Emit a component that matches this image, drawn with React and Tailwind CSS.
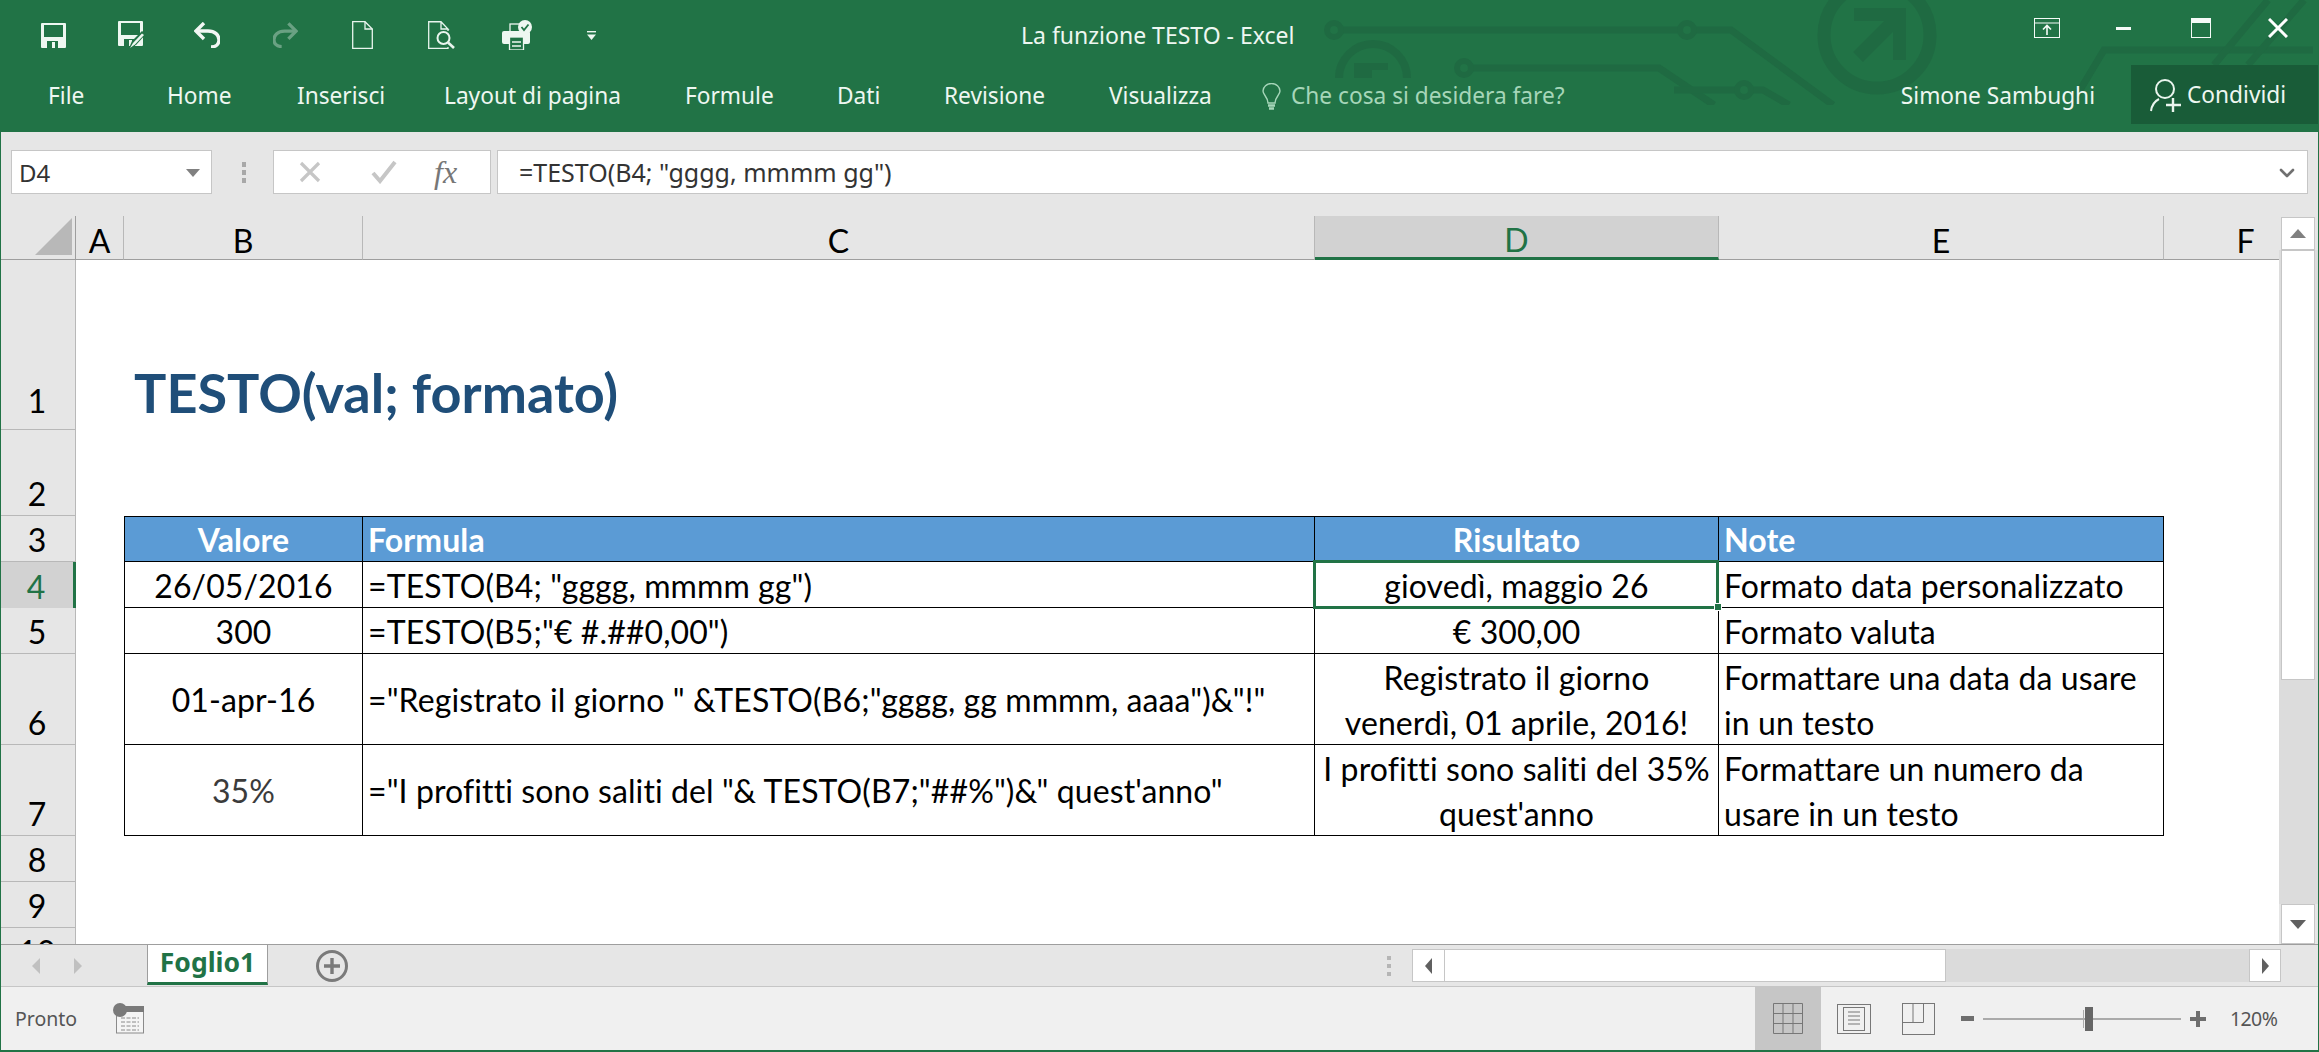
import { ChevronDown } from "lucide-react";

const ui = "font-['Noto_Sans',sans-serif]";
const sheet = "font-['Lato',sans-serif]";

const tabs = [
  ["File", "w-[35px] mr-[84px]"],
  ["Home", "w-[64px] mr-[66px]"],
  ["Inserisci", "w-[82px] mr-[65px]"],
  ["Layout di pagina", "w-[176px] mr-[65px]"],
  ["Formule", "w-[87px] mr-[65px]"],
  ["Dati", "w-[43px] mr-[64px]"],
  ["Revisione", "w-[100px] mr-[65px]"],
  ["Visualizza", "w-[104px] mr-[49px]"],
];

const columns = [
  { name: "A" },
  { name: "B" },
  { name: "C" },
  { name: "D", selected: true },
  { name: "E" },
  { name: "F", cut: true },
];

const rowLabels = ["1", "2", "3", "4", "5", "6", "7", "8", "9", "10"];

const tableRows = [
  {
    row: "3",
    head: true,
    cells: ["Valore", "Formula", "Risultato", "Note"],
  },
  {
    row: "4",
    cells: ["26/05/2016", '=TESTO(B4; "gggg, mmmm gg")', "giovedì, maggio 26", "Formato data personalizzato"],
  },
  {
    row: "5",
    cells: ["300", '=TESTO(B5;"€ #.##0,00")', "€ 300,00", "Formato valuta"],
  },
  {
    row: "6",
    cells: [
      "01-apr-16",
      '="Registrato il giorno " &TESTO(B6;"gggg, gg mmmm, aaaa")&"!"',
      "Registrato il giorno\nvenerdì, 01 aprile, 2016!",
      "Formattare una data da usare in un testo",
    ],
  },
  {
    row: "7",
    muted: true,
    cells: [
      "35%",
      '="I profitti sono saliti del "& TESTO(B7;"##%")&" quest\'anno"',
      "I profitti sono saliti del 35% quest'anno",
      "Formattare un numero da usare in un testo",
    ],
  },
];

const gridCols = "grid grid-cols-[75px_48px_239px_952px_404px_445px_115px]";

// the faint circuit board drawing behind the title bar
const CircuitArt = () => (
  <svg className="absolute left-0 top-0 pointer-events-none" width="2319" height="132" fill="none" stroke="#1f6a42">
    <defs>
      <clipPath id="art">
        <rect x="0" y="0" width="2132" height="105" />
        <rect x="2132" y="0" width="187" height="65" />
      </clipPath>
      <clipPath id="arch">
        <rect x="1300" y="0" width="200" height="78" />
      </clipPath>
    </defs>
    <g clipPath="url(#art)">
      <path d="M1340 30H1680M1692 30H1730L1832 105" strokeWidth="7" />
      <circle cx="1333" cy="30" r="7" strokeWidth="6" />
      <circle cx="1686" cy="30" r="7" strokeWidth="6" />
      <path d="M1470 68H1658L1713 105" strokeWidth="7" />
      <circle cx="1463" cy="68" r="7" strokeWidth="6" />
      <path d="M1673 90H1737M1750 90H1762L1788 105" strokeWidth="7" />
      <circle cx="1743" cy="90" r="7" strokeWidth="6" />
      <circle cx="1876" cy="35" r="53" strokeWidth="13" />
      <path d="M1857 57L1898 16" strokeWidth="14" />
      <path d="M1853 8H1905V60H1892V21H1853Z" fill="#1f6a42" stroke="none" />
      <path d="M2070 105L2103 50H2312" strokeWidth="7" />
      <path d="M2213 65L2267 0M2247 65L2303 0" strokeWidth="7" />
    </g>
    <g clipPath="url(#arch)">
      <circle cx="1372" cy="78" r="34" strokeWidth="8" />
      <path d="M1353 63H1387V70H1371V78H1353Z" fill="#1f6a42" stroke="none" />
    </g>
  </svg>
);

const SaveIcon = ({ className = "" }) => (
  <svg className={className} width="25" height="25" viewBox="0 0 25 25">
    <path
      fillRule="evenodd"
      fill="#eef7f1"
      d="M1 0H24Q25 0 25 1V24Q25 25 24 25H1Q0 25 0 24V1Q0 0 1 0ZM3 2V14H22V2ZM6 18V25H17V18ZM11 19H14V25H11Z"
    />
  </svg>
);

const SaveAsIcon = () => (
  <svg className="ml-[52px]" width="28" height="28" viewBox="0 0 28 28">
    <path
      fillRule="evenodd"
      fill="#eef7f1"
      d="M1 0H24Q25 0 25 1V24Q25 25 24 25H1Q0 25 0 24V1Q0 0 1 0ZM3 2V14H22V2ZM6 18V25H17V18ZM11 19H14V25H11Z"
    />
    <path d="M11 27L14 20L24 10L28 13L18 24Z" fill="#217346" />
    <path d="M12 27L15 22L24 12.5L26 14L17 23.5Z" fill="#eef7f1" />
  </svg>
);

const UndoIcon = ({ className = "" }) => (
  <svg className={className} width="26" height="26" viewBox="0 0 26 26" fill="none" stroke="#f2f7f4" strokeWidth="3.4">
    <path d="M10 1L2 9L10 17" />
    <path d="M3 9H14C21 9 25 13 25 18C25 22 22 25 17 25" />
  </svg>
);

const RedoIcon = () => (
  <svg className="ml-[53px] opacity-35 -scale-x-100" width="25" height="26" viewBox="0 0 26 26" fill="none" stroke="#f2f7f4" strokeWidth="3.4">
    <path d="M10 1L2 9L10 17" />
    <path d="M3 9H14C21 9 25 13 25 18C25 22 22 25 17 25" />
  </svg>
);

const NewIcon = () => (
  <svg className="ml-[54px]" width="21" height="28" viewBox="0 0 21 28" fill="none" stroke="#e9f5ee" strokeWidth="1.3">
    <path d="M0.7 0.7H13L20.3 8V27.3H0.7Z" />
    <path d="M13 0.7V8H20.3" />
  </svg>
);

const PreviewIcon = () => (
  <svg className="ml-[55px]" width="27" height="28" viewBox="0 0 27 28" fill="none" stroke="#e9f5ee" strokeWidth="1.3">
    <path d="M20 8V10M20 26V27.3H0.7V0.7H13L20 8H13V0.7" />
    <path d="M0.7 0.7H13" />
    <circle cx="15.5" cy="17" r="6" strokeWidth="2" />
    <path d="M20 21.5L26 27" strokeWidth="2.6" />
  </svg>
);

const PrintIcon = () => (
  <svg className="ml-[47px]" width="30" height="30" viewBox="0 0 30 30">
    <rect x="8" y="4" width="14" height="14" fill="none" stroke="#eef7f1" strokeWidth="1.3" />
    <rect x="0" y="11" width="28" height="13" rx="2" fill="#eef7f1" />
    <rect x="7.5" y="17" width="14" height="13" fill="#217346" stroke="#eef7f1" strokeWidth="1.3" />
    <path d="M10 22H19M10 26H19" stroke="#eef7f1" strokeWidth="1.3" />
    <circle cx="23" cy="7" r="7" fill="#eef7f1" />
    <path d="M19.5 7L22 10L26.5 4.5" fill="none" stroke="#217346" strokeWidth="1.8" />
  </svg>
);

const CaretIcon = () => (
  <svg className="ml-[55px]" width="9" height="9" viewBox="0 0 9 9" fill="#eef7f1">
    <rect width="9" height="1.4" />
    <path d="M0 3.5H9L4.5 9Z" />
  </svg>
);

const BulbIcon = () => (
  <svg width="19" height="27" viewBox="0 0 19 27" fill="none" stroke="#a6d6b9" strokeWidth="1.4">
    <path d="M6 20C6 14 1 12 1 8A8.5 7.5 0 0 1 18 8C18 12 13 14 13 20Z" />
    <path d="M6 22.5H13M7 25.5H12" strokeWidth="2.4" />
  </svg>
);

const ShareIcon = () => (
  <svg width="32" height="33" viewBox="0 0 32 33" fill="none" stroke="#eaf5ee" strokeWidth="2">
    <circle cx="15" cy="10" r="9" />
    <path d="M1 32C2 25 5 22 9 20" />
    <path d="M23 19V33M16 26H31" strokeWidth="2.4" />
  </svg>
);

const WindowControls = () => (
  <div className="flex items-center justify-end pr-[30px] h-[20px]">
    <svg width="26" height="20" viewBox="0 0 26 20" fill="none" stroke="#f5faf7" strokeWidth="1">
      <rect x="0.5" y="0.5" width="25" height="19" />
      <path d="M0.5 5H25.5" />
      <path d="M13 17V8M9 11.5L13 7.5L17 11.5" strokeWidth="1.6" />
    </svg>
    <div className="w-[15px] h-[3px] bg-[#f5faf7] ml-[56px]" />
    <svg className="ml-[60px]" width="20" height="20" viewBox="0 0 20 20" fill="none" stroke="#f5faf7">
      <rect x="0.5" y="0.5" width="19" height="19" />
      <rect x="0" y="0" width="20" height="5" fill="#f5faf7" stroke="none" />
    </svg>
    <svg className="ml-[57px]" width="20" height="20" viewBox="0 0 20 20" stroke="#ffffff" strokeWidth="3">
      <path d="M1 1L19 19M19 1L1 19" />
    </svg>
  </div>
);

const TitleBar = () => (
  <div className={`${ui} relative h-[132px] bg-[#217346] text-[#eef7f1] shrink-0`}>
    <CircuitArt />
    <div className="relative grid grid-cols-[1020px_276px_1fr] h-[65px]">
      <div className="flex items-center pl-[40px]">
        <SaveIcon />
        <SaveAsIcon />
        <UndoIcon className="ml-[48px]" />
        <RedoIcon />
        <NewIcon />
        <PreviewIcon />
        <PrintIcon />
        <CaretIcon />
      </div>
      <div className="text-[23px] leading-[70px] whitespace-nowrap">La funzione TESTO - Excel</div>
      <div className="pt-[18px]">
        <WindowControls />
      </div>
    </div>
    <div className="relative flex items-center h-[59px] pl-[47px] pt-[3px] text-[22.7px] whitespace-nowrap">
      {tabs.map(([label, width]) => (
        <div key={label} className={width}>
          {label}
        </div>
      ))}
      <BulbIcon />
      <div className="ml-[10px] text-[#a6d6b9] flex-1">Che cosa si desidera fare?</div>
      <div className="mr-[36px]">Simone Sambughi</div>
      <div className="flex items-center w-[187px] h-[59px] -mt-[3px] pt-[2px] pl-[19px] gap-[5px] bg-[#195c38]">
        <ShareIcon />
        <span>Condividi</span>
      </div>
    </div>
  </div>
);

const FormulaBar = () => (
  <div className={`${ui} flex items-center h-[84px] pb-[4px] pl-[10px] pr-[10px] bg-[#e6e6e6] shrink-0`}>
    <div className="flex items-center justify-between w-[201px] h-[44px] pl-[7px] pr-[11px] pt-[2px] bg-white border border-[#c6c6c6] text-[24px] text-[#333333]">
      <span>D4</span>
      <div className="w-0 h-0 border-x-[7px] border-t-[8px] border-x-transparent border-t-[#808080]" />
    </div>
    <div className="flex flex-col gap-[3px] ml-[30px] w-[4px]">
      <div className="h-[5px] bg-[#a8a8a8]" />
      <div className="h-[5px] bg-[#a8a8a8]" />
      <div className="h-[5px] bg-[#a8a8a8]" />
    </div>
    <div className="flex items-center w-[218px] h-[44px] ml-[27px] pl-[25px] bg-white border border-[#c6c6c6]">
      <svg width="22" height="22" viewBox="0 0 22 22" stroke="#c6c6c6" strokeWidth="3.2">
        <path d="M2 2L20 20M20 2L2 20" />
      </svg>
      <svg className="ml-[50px]" width="26" height="24" viewBox="0 0 26 24" fill="none" stroke="#c6c6c6" strokeWidth="4">
        <path d="M2 13L9 21L24 2" />
      </svg>
      <span className="ml-[37px] font-['Liberation_Serif',serif] italic text-[32px] leading-none text-[#777777]">fx</span>
    </div>
    <div className="flex items-center justify-between flex-1 h-[44px] ml-[6px] pl-[21px] pr-[8px] pt-[2px] bg-white border border-[#c6c6c6] text-[25px] text-[#333333]">
      <span>=TESTO(B4; "gggg, mmmm gg")</span>
      <ChevronDown size={24} strokeWidth={2.6} color="#707070" />
    </div>
  </div>
);

const ColumnHeader = ({ name, selected, cut }) => (
  <div
    className={`flex items-center justify-center pt-[6px] border-r border-[#b8b8b8] ${
      selected
        ? "bg-[#d2d2d2] text-[#217346] border-b-[3px] border-b-[#217346]"
        : "border-b border-b-[#9e9e9e]"
    } ${cut ? "pl-[48px] border-r-0" : ""}`}
  >
    {name}
  </div>
);

const RowHeader = ({ label, selected }) => (
  <div
    className={`flex items-end justify-center pr-[2px] text-[32px] leading-[40px] ${
      label === "1" ? "pb-[8px]" : "pb-[1px]"
    } ${
      selected
        ? "bg-[#d2d2d2] text-[#217346] border-r-[3px] border-[#217346]"
        : "bg-[#e6e6e6] text-black border-r border-b border-[#b8b8b8]"
    }`}
  >
    {label}
  </div>
);

const TableCell = ({ text, head, muted, center, selected, first }) => (
  <div
    className={`relative flex items-center min-w-0 pt-[2px] border-b border-r border-black text-[32px] leading-[45.5px] tracking-[0.1px] whitespace-pre-line ${
      head ? "bg-[#5b9bd5] border-t text-white font-bold" : "bg-white"
    } ${center ? "justify-center text-center" : "pl-[5px]"} ${first ? "border-l" : ""} ${
      muted ? "text-[#3b3b3b]" : head ? "" : "text-black"
    }`}
  >
    <span>{text}</span>
    {selected && (
      <>
        <div className="absolute z-10 -left-[2px] -top-[2px] -right-[1px] -bottom-[2px] border-[3px] border-[#217346]" />
        <div className="absolute z-10 -right-[4px] -bottom-[4px] w-[8px] h-[8px] bg-[#217346] border border-white" />
      </>
    )}
  </div>
);

const Blank = () => <div />;

const Sheet = () => (
  <div className={`${sheet} flex-1 min-h-0 bg-white overflow-hidden`}>
    <div className={`${gridCols} grid-rows-[170px_86px_46px_46px_46px_91px_91px_46px_46px_46px]`}>
      {rowLabels.map((row) => {
        const tableRow = tableRows.find((r) => r.row === row);
        return (
          <div key={row} className="contents">
            <RowHeader label={row} selected={row === "4"} />
            {row === "1" ? (
              <>
                <Blank />
                <div className="col-span-5 pt-[103px] pl-[10px] text-[54px] leading-[60px] font-bold text-[#1f4e79]">
                  TESTO(val; formato)
                </div>
              </>
            ) : tableRow ? (
              <>
                <Blank />
                {tableRow.cells.map((text, i) => (
                  <TableCell
                    key={i}
                    text={text}
                    head={tableRow.head}
                    muted={tableRow.muted && i === 0}
                    first={i === 0}
                    center={i === 0 || i === 2}
                    selected={row === "4" && i === 2}
                  />
                ))}
                <Blank />
              </>
            ) : (
              <div className="col-span-6" />
            )}
          </div>
        );
      })}
    </div>
  </div>
);

const VerticalScroll = () => (
  <div className="flex flex-col w-[39px] pt-[1px] bg-[#e6e6e6] shrink-0">
    <div className="flex items-center justify-center w-[34px] h-[33px] ml-[2px] bg-white border border-[#c6c6c6]">
      <div className="w-0 h-0 border-x-[8px] border-b-[9px] border-x-transparent border-b-[#808080]" />
    </div>
    <div className="flex-1 flex flex-col bg-[#dcdcdc]">
      <div className="w-[34px] h-[430px] ml-[2px] bg-white border border-[#c6c6c6]" />
    </div>
    <div className="flex items-center justify-center w-[34px] h-[40px] ml-[2px] bg-white border border-[#c6c6c6]">
      <div className="w-0 h-0 border-x-[8px] border-t-[9px] border-x-transparent border-t-[#606060]" />
    </div>
  </div>
);

const SheetTabs = () => (
  <div className={`${ui} flex items-center h-[43px] bg-[#e6e6e6] border-t border-[#9e9e9e] border-b border-b-[#c6c6c6] shrink-0`}>
    <div className="flex items-center w-[146px] pl-[31px] gap-[34px]">
      <div className="w-0 h-0 border-y-[8px] border-r-[8px] border-y-transparent border-r-[#c0c0c0]" />
      <div className="w-0 h-0 border-y-[8px] border-l-[8px] border-y-transparent border-l-[#c0c0c0]" />
    </div>
    <div className="flex items-center justify-center w-[121px] h-[40px] -mt-[2px] bg-white border-x border-[#9e9e9e] border-b-[3px] border-b-[#217346] text-[26.5px] font-bold text-[#217346]">
      Foglio1
    </div>
    <div className="flex items-center justify-center w-[32px] h-[32px] ml-[48px] rounded-full border-[3px] border-[#7a7a7a]">
      <svg width="18" height="18" viewBox="0 0 18 18" stroke="#7a7a7a" strokeWidth="3.4">
        <path d="M9 1V17M1 9H17" />
      </svg>
    </div>
    <div className="flex-1" />
    <div className="flex flex-col gap-[4px] w-[4px] mr-[21px]">
      <div className="h-[4px] bg-[#b5b5b5]" />
      <div className="h-[4px] bg-[#b5b5b5]" />
      <div className="h-[4px] bg-[#b5b5b5]" />
    </div>
    <div className="flex w-[869px] h-[33px] bg-[#dbdbdb] mr-[37px]">
      <div className="flex items-center justify-center w-[33px] bg-white border border-[#c6c6c6]">
        <div className="w-0 h-0 border-y-[8px] border-r-[7px] border-y-transparent border-r-[#606060]" />
      </div>
      <div className="w-[501px] bg-white border border-l-0 border-[#c6c6c6]" />
      <div className="flex-1" />
      <div className="flex items-center justify-center w-[32px] bg-white border border-[#c6c6c6]">
        <div className="w-0 h-0 border-y-[8px] border-l-[7px] border-y-transparent border-l-[#606060]" />
      </div>
    </div>
  </div>
);

const StatusBar = () => (
  <div className={`${ui} flex items-center h-[63px] pl-[14px] bg-[#f0f0f0] text-[#555555] text-[19.5px] shrink-0`}>
    <span className="w-[98px]">Pronto</span>
    <svg width="31" height="31" viewBox="0 0 31 31" fill="none" stroke="#8a8a8a">
      <rect x="3.5" y="3.5" width="27" height="26.5" fill="#f5f5f5" />
      <rect x="3" y="3" width="28" height="6" fill="#7a7a7a" stroke="none" />
      <circle cx="7" cy="7" r="7" fill="#7a7a7a" stroke="none" />
      <path d="M8 15H26M8 19H26M8 23H26M8 27H26" strokeDasharray="4 1.5" strokeWidth="1" />
    </svg>
    <div className="flex-1" />
    <div className="flex items-center justify-center w-[66px] h-[63px] bg-[#c6c6c6]">
      <svg width="30" height="31" viewBox="0 0 30 31" fill="none" stroke="#777777">
        <path d="M0.5 0.5H29.5V30.5H0.5ZM10 0.5V30.5M20 0.5V30.5M0.5 10.5H29.5M0.5 20.5H29.5" />
      </svg>
    </div>
    <svg className="ml-[16px]" width="34" height="30" viewBox="0 0 34 30" fill="none" stroke="#777777">
      <rect x="0.5" y="0.5" width="33" height="29" />
      <rect x="6.5" y="3.5" width="21" height="23" />
      <path d="M11 8H23M11 12H23M11 16H23M11 20H23" />
    </svg>
    <svg className="ml-[31px]" width="33" height="32" viewBox="0 0 33 32" fill="none" stroke="#777777">
      <rect x="0.5" y="0.5" width="32" height="31" />
      <path d="M0.5 19.5H21.5V0.5M11 0.5V19.5" />
    </svg>
    <div className="w-[13px] h-[5px] ml-[26px] bg-[#6e6e6e]" />
    <div className="relative w-[198px] h-[2px] ml-[9px] bg-[#aaaaaa]">
      <div className="absolute left-[100px] -top-[8px] w-px h-[18px] bg-[#aaaaaa]" />
      <div className="absolute left-[102px] -top-[11px] w-[8px] h-[24px] bg-[#666666]" />
    </div>
    <svg className="ml-[9px]" width="16" height="16" viewBox="0 0 16 16" stroke="#6e6e6e" strokeWidth="4">
      <path d="M8 0V16M0 8H16" />
    </svg>
    <span className="w-[48px] ml-[24px] mr-[40px] whitespace-nowrap tracking-[-0.6px]">120%</span>
  </div>
);

const App = () => (
  <div className="flex flex-col w-[2319px] h-[1052px] overflow-hidden bg-[#e6e6e6] border-x border-b-2 border-[#217346]">
    <TitleBar />
    <FormulaBar />
    <div className="flex flex-1 min-h-0">
      <div className="flex flex-col flex-1 min-w-0">
        <div className={`${sheet} ${gridCols} grid-rows-[44px] shrink-0 text-[32px] leading-none text-black bg-[#e6e6e6]`}>
          <div className="relative border-r border-b border-[#9e9e9e]">
            <svg className="absolute right-[3px] bottom-[4px]" width="37" height="37" viewBox="0 0 37 37" fill="#b8b8b8">
              <path d="M37 0V37H0Z" />
            </svg>
          </div>
          {columns.map((c) => (
            <ColumnHeader key={c.name} name={c.name} selected={c.selected} cut={c.cut} />
          ))}
        </div>
        <Sheet />
      </div>
      <VerticalScroll />
    </div>
    <SheetTabs />
    <StatusBar />
  </div>
);

export default App;
